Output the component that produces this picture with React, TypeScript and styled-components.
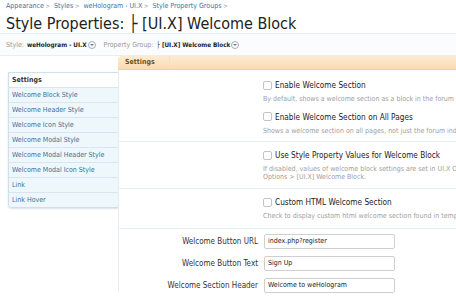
import React from "react";
import styled, { createGlobalStyle } from "styled-components";

const Global = createGlobalStyle`
  html, body { margin: 0; padding: 0; background: #ffffff; }
  body {
    font-family: "DejaVu Sans Condensed", "DejaVu Sans", sans-serif;
    font-stretch: condensed;
    color: #222;
    width: 456px;
    height: 300px;
    overflow: hidden;
  }
`;

const Page = styled.div`
  width: 456px;
  display: flex;
  flex-direction: column;
`;

const Breadcrumb = styled.nav`
  display: flex;
  gap: 4px;
  padding: 1px 6px 0;
  height: 10px;
  font-size: 7px;
  line-height: 10px;
`;

const Crumb = styled.a`
  color: #3d73a6;
  text-decoration: none;
  &::after { content: " >"; color: #888; font-size: 6px; }
`;

const Title = styled.h1`
  margin: 0;
  padding: 3px 6px 0;
  height: 19px;
  font-size: 16px;
  line-height: 19px;
  font-weight: normal;
  color: #222;
  white-space: nowrap;
  border-bottom: 1px solid #e4edf4;
`;

const FilterBar = styled.div`
  display: flex;
  align-items: center;
  height: 21px;
  padding: 0 6px;
  font-size: 7px;
  background: #fafcfe;
  border-bottom: 1px solid #e8eef3;
  white-space: nowrap;
`;

const FilterLabel = styled.span`
  color: #999;
  margin-right: 3px;
`;

const FilterValue = styled.span`
  color: #222;
  font-weight: bold;
  font-size: 6.3px;
`;

const DropIcon = styled.span`
  display: inline-flex;
  align-items: center;
  justify-content: center;
  width: 8px;
  height: 8px;
  margin: 0 8px 0 1px;
  border: 1px solid #aab;
  border-radius: 50%;
  box-sizing: border-box;
  &::after {
    content: "";
    border-left: 2px solid transparent;
    border-right: 2px solid transparent;
    border-top: 2px solid #778;
    margin-top: 1px;
  }
`;

const Main = styled.div`
  display: grid;
  grid-template-columns: 118px 1fr;
`;

const Side = styled.div`
  padding: 16px 0 0 8px;
`;

const NavBox = styled.div`
  border: 1px solid #cfe0ec;
  border-right: none;
  border-radius: 0 0 0 4px;
  box-shadow: 0 1px 2px rgba(160, 180, 200, 0.4);
  overflow: hidden;
`;

const NavHeader = styled.div`
  height: 14px;
  line-height: 14px;
  padding-left: 3px;
  font-size: 7px;
  font-weight: bold;
  color: #333;
  background: #fff;
  border-bottom: 1px solid #d8e6f0;
`;

const NavItem = styled.a`
  display: block;
  height: 14px;
  line-height: 14px;
  padding-left: 3px;
  font-size: 7px;
  color: #3f6f97;
  background: #eef7fc;
  text-decoration: none;
  border-bottom: 1px solid #d8e6f0;
  &:last-child { border-bottom: none; }
`;

const Content = styled.div`
  display: flex;
  flex-direction: column;
`;

const TabBar = styled.div`
  height: 13px;
  display: flex;
  background: linear-gradient(#fdebd2, #f8dcb0);
  border-bottom: 1px solid #f3cf96;
  border-radius: 4px 0 0 0;
`;

const Tab = styled.div`
  padding: 0 14px 0 7px;
  font-size: 7px;
  line-height: 13px;
  font-weight: bold;
  color: #6b4e22;
  border-right: 1px solid #f6e2c2;
`;

const Panel = styled.div`
  border-left: 1px solid #e6eef4;
  display: flex;
  flex-direction: column;
`;

const Group = styled.div<{ $top: number; $bottom: number }>`
  display: flex;
  flex-direction: column;
  padding: ${(p) => p.$top}px 0 ${(p) => p.$bottom}px 144px;
  border-bottom: 1px solid #e9eef2;
`;

const CheckRow = styled.label<{ $gap?: number }>`
  display: flex;
  align-items: center;
  gap: 3px;
  height: 14px;
  margin-top: ${(p) => p.$gap ?? 0}px;
  font-size: 8.2px;
  color: #222;
  white-space: nowrap;
`;

const Box = styled.span`
  width: 9px;
  height: 9px;
  border: 1px solid #c4c4c4;
  border-radius: 2px;
  background: #fff;
  box-sizing: border-box;
`;

const Desc = styled.div`
  margin-top: 4px;
  font-size: 7px;
  line-height: 7.5px;
  color: #a0a0a0;
  white-space: nowrap;
`;

const Fields = styled.div`
  display: grid;
  grid-template-columns: 139px 131px;
  column-gap: 6px;
  row-gap: 7px;
  padding-top: 5px;
  align-items: center;
`;

const FieldLabel = styled.label`
  text-align: right;
  font-size: 8px;
  color: #333;
  white-space: nowrap;
`;

const Input = styled.div`
  height: 15px;
  box-sizing: border-box;
  border: 1px solid #cfcfcf;
  border-radius: 2px;
  background: #fff;
  padding-left: 3px;
  font-size: 7px;
  line-height: 13px;
  color: #222;
  white-space: nowrap;
`;

const navItems = [
  "Welcome Block Style",
  "Welcome Header Style",
  "Welcome Icon Style",
  "Welcome Modal Style",
  "Welcome Modal Header Style",
  "Welcome Modal Icon Style",
  "Link",
  "Link Hover",
];

const fields = [
  ["Welcome Button URL", "index.php?register"],
  ["Welcome Button Text", "Sign Up"],
  ["Welcome Section Header", "Welcome to weHologram"],
];

export default function App() {
  return (
    <Page>
      <Global />
      <Breadcrumb>
        <Crumb>Appearance</Crumb>
        <Crumb>Styles</Crumb>
        <Crumb>weHologram - UI.X</Crumb>
        <Crumb>Style Property Groups</Crumb>
      </Breadcrumb>
      <Title>Style Properties: ├ [UI.X] Welcome Block</Title>
      <FilterBar>
        <FilterLabel>Style:</FilterLabel>
        <FilterValue>weHologram - UI.X</FilterValue>
        <DropIcon />
        <FilterLabel>Property Group:</FilterLabel>
        <FilterValue>├ [UI.X] Welcome Block</FilterValue>
        <DropIcon />
      </FilterBar>
      <Main>
        <Side>
          <NavBox>
            <NavHeader>Settings</NavHeader>
            {navItems.map((n) => (
              <NavItem key={n}>{n}</NavItem>
            ))}
          </NavBox>
        </Side>
        <Content>
          <TabBar>
            <Tab>Settings</Tab>
          </TabBar>
          <Panel>
            <Group $top={8} $bottom={6}>
              <CheckRow>
                <Box />
                Enable Welcome Section
              </CheckRow>
              <Desc>By default, shows a welcome section as a block in the forum index.</Desc>
              <CheckRow $gap={6}>
                <Box />
                Enable Welcome Section on All Pages
              </CheckRow>
              <Desc>Shows a welcome section on all pages, not just the forum index.</Desc>
            </Group>
            <Group $top={6} $bottom={7}>
              <CheckRow>
                <Box />
                Use Style Property Values for Welcome Block
              </CheckRow>
              <Desc>
                If disabled, values of welcome block settings are set in UI.X Options
                <br />
                Options &gt; [UI.X] Welcome Block.
              </Desc>
            </Group>
            <Group $top={6} $bottom={7}>
              <CheckRow>
                <Box />
                Custom HTML Welcome Section
              </CheckRow>
              <Desc>Check to display custom html welcome section found in template.</Desc>
            </Group>
            <Fields>
              {fields.map(([l, v]) => (
                <React.Fragment key={l}>
                  <FieldLabel>{l}</FieldLabel>
                  <Input>{v}</Input>
                </React.Fragment>
              ))}
            </Fields>
          </Panel>
        </Content>
      </Main>
    </Page>
  );
}
